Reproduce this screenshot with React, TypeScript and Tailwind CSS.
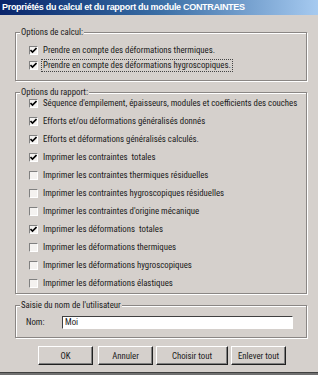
import React from "react";

const calcOptions = [
	{ label: "Prendre en compte des déformations thermiques.", checked: true },
	{ label: "Prendre en compte des déformations hygroscopiques.", checked: true, focused: true },
];

const reportOptions = [
	{ label: "Séquence d'empilement, épaisseurs, modules et coefficients des couches", checked: true },
	{ label: "Efforts et/ou déformations généralisés donnés", checked: true },
	{ label: "Efforts et déformations généralisés calculés.", checked: true },
	{ label: "Imprimer les contraintes  totales", checked: true },
	{ label: "Imprimer les contraintes thermiques résiduelles", checked: false },
	{ label: "Imprimer les contraintes hygroscopiques résiduelles", checked: false },
	{ label: "Imprimer les contraintes d'origine mécanique", checked: false },
	{ label: "Imprimer les déformations  totales", checked: true },
	{ label: "Imprimer les déformations thermiques", checked: false },
	{ label: "Imprimer les déformations hygroscopiques", checked: false },
	{ label: "Imprimer les déformations élastiques", checked: false },
];

function CheckBox({ checked }: { checked: boolean }) {
	return (
		<span className="flex h-[9px] w-[9px] shrink-0 items-center justify-center border border-t-[#808080] border-l-[#808080] border-b-white border-r-white bg-[#f4f2f0]">
			{checked && (
				<svg width="7" height="7" viewBox="0 0 7 7" aria-hidden="true">
					<path d="M0.5 3 L2.5 5 L6.5 1" fill="none" stroke="#000" strokeWidth="1.6" />
				</svg>
			)}
		</span>
	);
}

function Option({
	label,
	checked,
	focused,
	height,
}: {
	label: string;
	checked: boolean;
	focused?: boolean;
	height: string;
}) {
	return (
		<div className={`flex items-center pl-[13px] ${height}`}>
			<CheckBox checked={checked} />
			<span
				className={`ml-[3px] whitespace-pre leading-[11px] ${
					focused ? "border border-dotted border-[#444] px-[1px]" : "border border-transparent px-[1px]"
				}`}
			>
				{label}
			</span>
		</div>
	);
}

function Group({
	title,
	className,
	children,
}: {
	title: string;
	className: string;
	children: React.ReactNode;
}) {
	return (
		<div
			className={`relative mr-[11px] ml-[15px] border border-[#8a8684] shadow-[inset_1px_1px_0_#fff,1px_1px_0_#fff] ${className}`}
		>
			<span className="absolute -top-[7px] left-[4px] bg-[#d5d0cc] px-[1px] leading-[13px]">
				{title}
			</span>
			{children}
		</div>
	);
}

function Button({ label, className }: { label: string; className: string }) {
	return (
		<button
			type="button"
			className={`flex h-[19px] items-center justify-center border border-t-white border-l-white border-b-[#202020] border-r-[#202020] bg-[#d5d0cc] shadow-[inset_-1px_-1px_0_#808080] leading-[12px] ${className}`}
		>
			{label}
		</button>
	);
}

export default function App() {
	return (
		<div className="flex h-[375px] w-[318px] flex-col overflow-hidden bg-[#d5d0cc] text-[8.8px] text-[#1a1a1a] font-['Roboto_Condensed','DejaVu_Sans_Condensed',sans-serif]">
			<div className="flex h-[15px] shrink-0 items-center bg-gradient-to-r from-[#0a246a] via-[#3a6ea5] to-[#a6caf0] pl-[2px] font-['Liberation_Sans',Arial,sans-serif] text-[9px] font-bold tracking-[-0.3px] text-white">
				Propriétés du calcul et du rapport du module CONTRAINTES
			</div>

			<Group title="Options de calcul:" className="mt-[17px] h-[49px] pt-[10px]">
				{calcOptions.map((o) => (
					<Option key={o.label} label={o.label} checked={o.checked} focused={o.focused} height="h-[15px]" />
				))}
			</Group>

			<Group title="Options du rapport:" className="mt-[11px] h-[202px] pt-[1px]">
				{reportOptions.map((o) => (
					<Option key={o.label} label={o.label} checked={o.checked} height="h-[18px]" />
				))}
			</Group>

			<Group title="Saisie du nom de l'utilisateur" className="mt-[11px] h-[33px] pt-[10px]">
				<div className="flex items-center pl-[10px]">
					<span className="w-[36px]">Nom:</span>
					<div className="flex h-[13px] w-[231px] items-center border border-t-[#404040] border-l-[#404040] border-b-white border-r-white bg-white pl-[2px] leading-[11px]">
						Moi
					</div>
				</div>
			</Group>

			<div className="mt-[8px] flex">
				<Button label="OK" className="ml-[38px] w-[55px]" />
				<Button label="Annuler" className="ml-[5px] w-[55px]" />
				<Button label="Choisir tout" className="ml-[3px] w-[72px]" />
				<Button label="Enlever tout" className="ml-[3px] w-[55px]" />
			</div>

			<div className="mt-auto h-[3px] shrink-0 border-t border-[#404040] bg-[#707070]" />
		</div>
	);
}
